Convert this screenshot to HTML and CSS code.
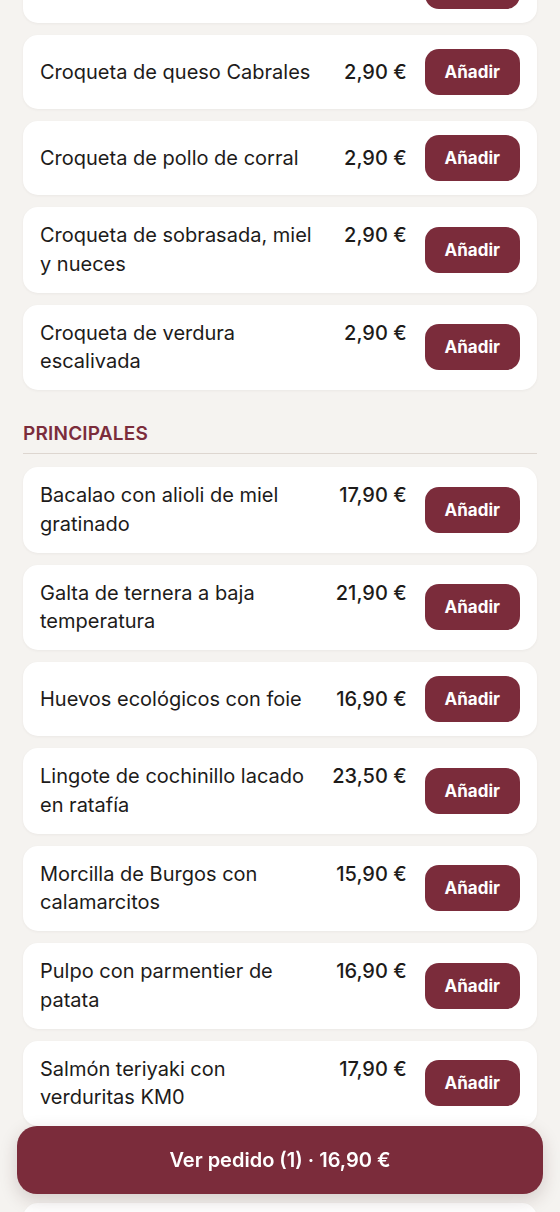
FILE: index.html
```html
<!DOCTYPE html>
<html lang="es">
<head>
<meta charset="utf-8">
<meta name="viewport" content="width=device-width, initial-scale=1">
<title>Carta</title>
<link rel="stylesheet" href="styles.css">
</head>
<body>
<main class="menu">
  <section class="section section-first">
    <ul class="items">
      <li class="item"><div class="info"><span class="name">Croqueta de jamón ibérico</span><span class="price">2,90 €</span></div><button class="add">Añadir</button></li>
      <li class="item"><div class="info"><span class="name">Croqueta de queso Cabrales</span><span class="price">2,90 €</span></div><button class="add">Añadir</button></li>
      <li class="item"><div class="info"><span class="name">Croqueta de pollo de corral</span><span class="price">2,90 €</span></div><button class="add">Añadir</button></li>
      <li class="item"><div class="info"><span class="name">Croqueta de sobrasada, miel y nueces</span><span class="price">2,90 €</span></div><button class="add">Añadir</button></li>
      <li class="item"><div class="info"><span class="name">Croqueta de verdura escalivada</span><span class="price">2,90 €</span></div><button class="add">Añadir</button></li>
    </ul>
  </section>
  <section class="section">
    <h2 class="section-title">PRINCIPALES</h2>
    <ul class="items">
      <li class="item"><div class="info"><span class="name">Bacalao con alioli de miel gratinado</span><span class="price">17,90 €</span></div><button class="add">Añadir</button></li>
      <li class="item"><div class="info"><span class="name">Galta de ternera a baja temperatura</span><span class="price">21,90 €</span></div><button class="add">Añadir</button></li>
      <li class="item"><div class="info"><span class="name">Huevos ecológicos con foie</span><span class="price">16,90 €</span></div><button class="add">Añadir</button></li>
      <li class="item"><div class="info"><span class="name">Lingote de cochinillo lacado en ratafía</span><span class="price">23,50 €</span></div><button class="add">Añadir</button></li>
      <li class="item"><div class="info"><span class="name">Morcilla de Burgos con calamarcitos</span><span class="price">15,90 €</span></div><button class="add">Añadir</button></li>
      <li class="item"><div class="info"><span class="name">Pulpo con parmentier de patata</span><span class="price">16,90 €</span></div><button class="add">Añadir</button></li>
      <li class="item"><div class="info"><span class="name">Salmón teriyaki con verduritas KM0</span><span class="price">17,90 €</span></div><button class="add">Añadir</button></li>
    </ul>
  </section>
  <section class="section">
    <h2 class="section-title">POSTRES</h2>
    <ul class="items">
      <li class="item"><div class="info"><span class="name">Tarta de queso casera</span><span class="price">6,90 €</span></div><button class="add">Añadir</button></li>
      <li class="item"><div class="info"><span class="name">Coulant de chocolate</span><span class="price">6,90 €</span></div><button class="add">Añadir</button></li>
    </ul>
  </section>
</main>
<button class="order-bar">Ver pedido (1) · 16,90 €</button>
</body>
</html>
```
FILE: styles.css
```css
* { box-sizing: border-box; }

html, body {
  margin: 0;
  padding: 0;
}

body {
  background: #f5f3f0;
  font-family: Inter, "Noto Sans", "Liberation Sans", sans-serif;
  color: #1d1b1a;
  overflow: hidden;
}

.menu {
  padding: 0 23px 120px;
  margin-top: -51px;
}

.section-title {
  margin: 30px 0 0;
  padding: 0 0 5px;
  font-size: 19px;
  line-height: 28px;
  font-weight: 600;
  color: #7b2c3b;
  letter-spacing: 0.2px;
  border-bottom: 1px solid #ddd6d0;
}

.items {
  list-style: none;
  margin: 0;
  padding: 0;
  display: flex;
  flex-direction: column;
  gap: 12px;
}

.section-title + .items {
  margin-top: 13px;
}

.item {
  display: flex;
  align-items: center;
  background: #ffffff;
  border-radius: 15px;
  padding: 14px 17px;
  min-height: 74px;
  box-shadow: 0 1px 3px rgba(60, 40, 30, 0.05);
}

.info {
  flex: 1;
  min-width: 0;
  display: flex;
  align-items: flex-start;
}

.name {
  flex: 1;
  font-size: 20px;
  line-height: 28.75px;
  font-weight: 400;
  color: #1d1b1a;
  min-width: 0;
}

.price {
  margin-left: 16px;
  font-size: 20px;
  line-height: 28.75px;
  font-weight: 500;
  white-space: nowrap;
  color: #1d1b1a;
}

.add {
  margin-left: 18px;
  height: 46px;
  padding: 0 20px;
  border: none;
  border-radius: 14px;
  background: #7b2c3b;
  color: #ffffff;
  font-family: inherit;
  font-size: 17px;
  font-weight: 700;
  flex-shrink: 0;
}

.order-bar {
  position: fixed;
  left: 17px;
  right: 17px;
  bottom: 18px;
  height: 68px;
  border: none;
  border-radius: 20px;
  background: #7b2c3b;
  color: #ffffff;
  font-family: inherit;
  font-size: 20px;
  font-weight: 600;
  box-shadow: 0 6px 18px rgba(60, 30, 30, 0.18);
}
```
